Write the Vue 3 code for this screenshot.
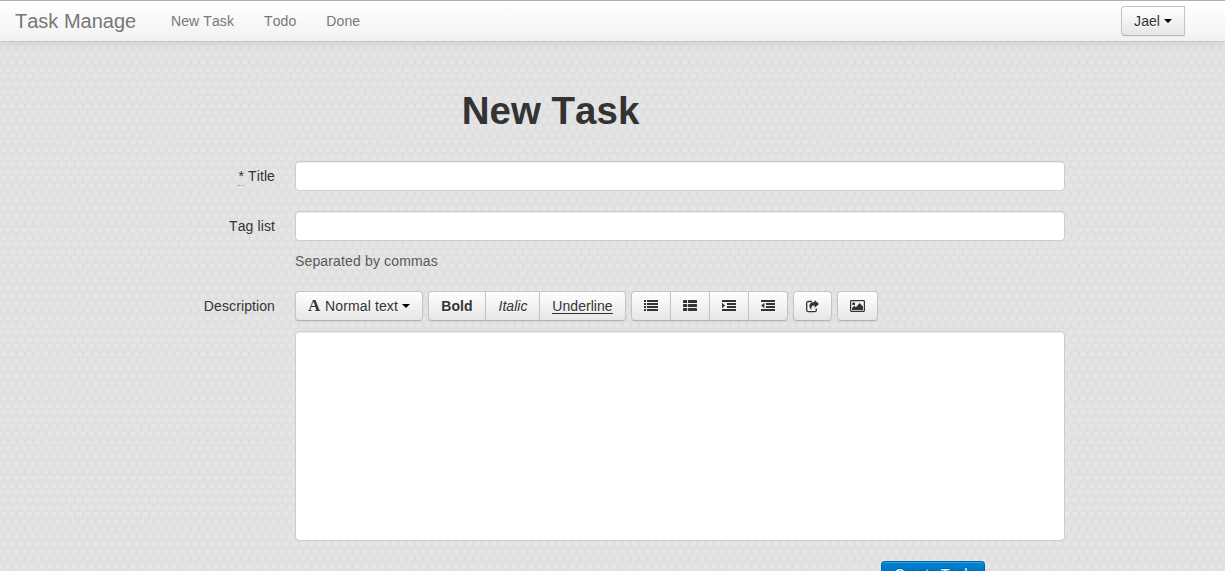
<script setup>
const links = ['New Task', 'Todo', 'Done']
const rows = [0, 3, 6, 9]
</script>

<template>
  <div class="page">
    <svg class="texture" width="1225" height="571" aria-hidden="true">
      <defs>
        <pattern id="cells" width="8.3" height="14.6" patternUnits="userSpaceOnUse">
          <g fill="#e5e5e5" stroke="#dcdcdc" stroke-width="0.8">
            <circle cx="4.15" cy="3.6" r="3.8" />
            <circle cx="0" cy="10.9" r="3.8" />
            <circle cx="8.3" cy="10.9" r="3.8" />
          </g>
        </pattern>
      </defs>
      <rect width="1225" height="571" fill="url(#cells)" />
    </svg>

    <header class="navbar">
      <a class="brand">Task Manage</a>
      <nav>
        <a v-for="l in links" :key="l">{{ l }}</a>
      </nav>
      <button class="btn user">Jael <i class="caret"></i></button>
    </header>

    <main>
      <h1>New Task</h1>
      <form @submit.prevent>
        <div class="row">
          <label for="title"><abbr>*</abbr> Title</label>
          <input id="title" type="text" />
        </div>
        <div class="row">
          <label for="tags">Tag list</label>
          <div class="controls">
            <input id="tags" type="text" />
            <p class="help">Separated by commas</p>
          </div>
        </div>
        <div class="row">
          <label for="description">Description</label>
          <div class="controls">
            <div class="toolbar">
              <div class="group">
                <button type="button" class="btn style-btn">
                  <span class="font-icon">A</span>Normal text <i class="caret"></i>
                </button>
              </div>
              <div class="group">
                <button type="button" class="btn bold">Bold</button>
                <button type="button" class="btn italic">Italic</button>
                <button type="button" class="btn underline"><span>Underline</span></button>
              </div>
              <div class="group icons">
                <button type="button" class="btn">
                  <svg width="14" height="12" viewBox="0 0 14 12">
                    <path v-for="y in rows" :key="y" :transform="`translate(0 ${y})`" d="M0 0h2v2H0zM3 0h11v2H3z" />
                  </svg>
                </button>
                <button type="button" class="btn">
                  <svg width="14" height="12" viewBox="0 0 14 12">
                    <g v-for="y in [0, 4, 8]" :key="y">
                      <rect x="0" :y="y" width="4.2" height="3.1" rx=".7" />
                      <rect x="5" :y="y" width="9" height="3.1" rx=".7" />
                    </g>
                  </svg>
                </button>
                <button type="button" class="btn">
                  <svg width="14" height="12" viewBox="0 0 14 12">
                    <path d="M0 0h14v2H0zM5 3h9v2H5zM5 6h9v2H5zM0 9h14v2H0zM0 2.7l3 2.8L0 8.3z" />
                  </svg>
                </button>
                <button type="button" class="btn">
                  <svg width="14" height="12" viewBox="0 0 14 12">
                    <path d="M0 0h14v2H0zM5 3h9v2H5zM5 6h9v2H5zM0 9h14v2H0zM3.4 2.7L.2 5.5l3.2 2.8z" />
                  </svg>
                </button>
              </div>
              <div class="group icons">
                <button type="button" class="btn">
                  <svg width="13" height="13" viewBox="0 0 13 13">
                    <path d="M6 1.5H2.2Q.7 1.5.7 3v7.2q0 1.5 1.5 1.5h6.6q1.5 0 1.5-1.5V8.5" fill="none" stroke="#333" stroke-width="1.3" />
                    <path d="M8.6 0L13 3.9 8.6 7.8V5.6C6 5.4 5.1 6.6 5.3 9.8 1.6 6.2 3.6 1.9 8.6 2z" />
                  </svg>
                </button>
              </div>
              <div class="group icons">
                <button type="button" class="btn">
                  <svg width="15" height="12" viewBox="0 0 15 12">
                    <rect x=".6" y=".6" width="13.8" height="10.8" rx=".8" fill="none" stroke="#333" stroke-width="1.2" />
                    <circle cx="3.7" cy="3.7" r="1.5" />
                    <path d="M2 10V8l2.4-2.2 1.5 1.4L9.6 3l3.4 3.4V10z" />
                  </svg>
                </button>
              </div>
            </div>
            <textarea id="description"></textarea>
          </div>
        </div>
        <div class="actions">
          <button type="submit" class="btn primary">Create Task</button>
        </div>
      </form>
    </main>
  </div>
</template>

<style>
body {
  overflow: hidden;
}
</style>

<style scoped>
.page {
  position: relative;
  width: 1225px;
  height: 571px;
  overflow: hidden;
  background: #e1e1e1;
  color: #333;
  font: 14px/20px "Liberation Sans", Arial, sans-serif;
  font-kerning: none;
  letter-spacing: 0.1px;
}
.texture {
  position: absolute;
  inset: 0;
}
.navbar {
  position: relative;
  box-sizing: border-box;
  display: flex;
  align-items: center;
  height: 41px;
  padding: 0 40px 0 15px;
  border-top: 1px solid #b9aca2;
  background: linear-gradient(#fff, #f2f2f2);
  box-shadow: 0 1px 10px rgba(0, 0, 0, 0.1), 0 1px 0 #d4d4d4;
  color: #777;
}
.brand {
  width: 121px;
  font-size: 20px;
  letter-spacing: 0;
  white-space: nowrap;
}
nav {
  display: flex;
  gap: 30px;
  margin-left: 35px;
}
.btn {
  box-sizing: border-box;
  height: 30px;
  margin: 0;
  padding: 4px 12px;
  border: 1px solid #c5c5c5;
  border-bottom-color: #b3b3b3;
  border-radius: 4px;
  background: linear-gradient(#fff, #e6e6e6);
  box-shadow: inset 0 1px 0 rgba(255, 255, 255, 0.2), 0 1px 2px rgba(0, 0, 0, 0.05);
  color: #333;
  font: inherit;
  font-kerning: none;
  letter-spacing: 0.05px;
  text-shadow: 0 1px 1px rgba(255, 255, 255, 0.75);
  white-space: nowrap;
}
.caret {
  display: inline-block;
  border: 4px solid transparent;
  border-top-color: #000;
  border-bottom: 0;
  vertical-align: 3px;
}
.user {
  width: 64px;
  padding: 4px 11px;
  margin-left: auto;
  border-radius: 4px 0 0 4px;
}
main {
  position: relative;
  width: 950px;
  margin-left: 115px;
}
h1 {
  width: 871px;
  margin: 0;
  padding: 50px 0 30px;
  font-size: 38.5px;
  letter-spacing: 0;
  line-height: 40px;
  text-align: center;
}
.row {
  display: flex;
  gap: 20px;
  margin-bottom: 20px;
}
label {
  width: 160px;
  padding-top: 5px;
  text-align: right;
}
abbr {
  padding-bottom: 1px;
  border-bottom: 1px dotted #999;
}
input,
textarea {
  box-sizing: border-box;
  display: block;
  width: 770px;
  height: 30px;
  margin: 0;
  border: 1px solid #ccc;
  border-radius: 4px;
  background: #fff;
  box-shadow: inset 0 1px 1px rgba(0, 0, 0, 0.075);
  resize: none;
}
.help {
  margin: 10px 0 0;
  color: #595959;
  letter-spacing: 0.15px;
}
.toolbar {
  display: flex;
  gap: 5px;
  margin-bottom: 10px;
}
.group {
  display: flex;
}
.group .btn + .btn {
  margin-left: -1px;
}
.group .btn:not(:first-child) {
  border-top-left-radius: 0;
  border-bottom-left-radius: 0;
}
.group .btn:not(:last-child) {
  border-top-right-radius: 0;
  border-bottom-right-radius: 0;
}
.style-btn {
  width: 128px;
  padding: 4px 11px;
  letter-spacing: 0.12px;
}
.font-icon {
  display: inline-block;
  width: 17px;
  font: bold 17px/16px "Liberation Serif", serif;
  text-align: left;
}
.bold {
  width: 58px;
  font-weight: bold;
}
.italic {
  width: 55px;
  padding: 4px 11px 4px 12px;
  font-style: italic;
}
.underline {
  width: 87px;
  padding: 4px 12px;
}
.underline span {
  display: block;
  height: 17px;
  margin-bottom: 3px;
  border-bottom: 1px solid #333;
  line-height: 20px;
}
.icons .btn {
  display: flex;
  align-items: center;
  justify-content: center;
  width: 40px;
  padding: 0;
}
.icons .btn:only-child {
  width: 39px;
}
.icons:last-child .btn:only-child {
  width: 41px;
}
.icons svg {
  fill: #333;
}
textarea {
  height: 210px;
}
.actions {
  display: flex;
  justify-content: flex-end;
  width: 870px;
}
.primary {
  width: 104px;
  padding: 2px 10px 6px;
  border-color: #0062b0 #0062b0 #003f81;
  background: linear-gradient(#0088cc, #0044cc);
  color: #fff;
  text-shadow: 0 -1px 0 rgba(0, 0, 0, 0.25);
}
</style>
